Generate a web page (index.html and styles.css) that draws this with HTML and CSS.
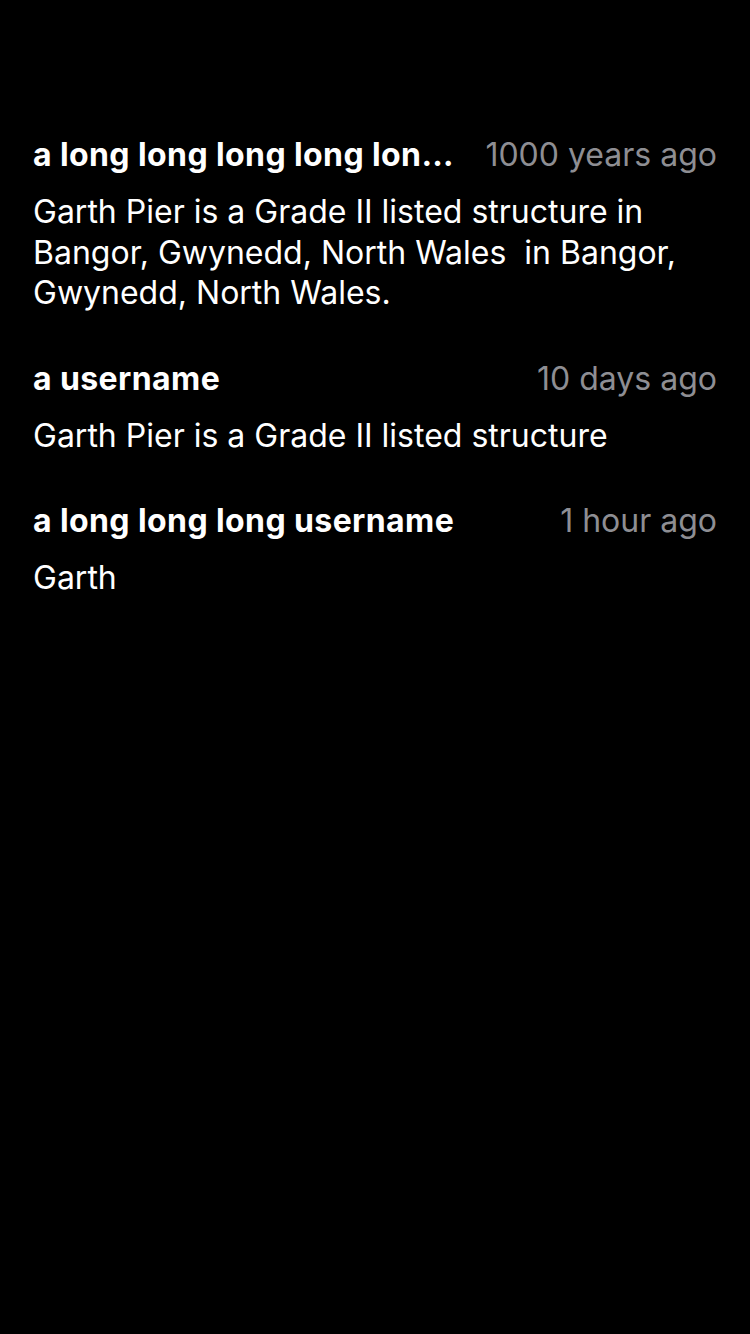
FILE: index.html
```html
<!DOCTYPE html>
<html>
<head>
<meta charset="utf-8">
<link rel="stylesheet" href="styles.css">
</head>
<body>
<main class="list">
  <article class="comment">
    <header class="comment-head">
      <span class="user">a long long long long long long username</span>
      <span class="time">1000 years ago</span>
    </header>
    <p class="body">Garth Pier is a Grade II listed structure in Bangor, Gwynedd, North Wales&nbsp; in Bangor, Gwynedd, North Wales.</p>
  </article>
  <article class="comment">
    <header class="comment-head">
      <span class="user">a username</span>
      <span class="time">10 days ago</span>
    </header>
    <p class="body">Garth Pier is a Grade II listed structure</p>
  </article>
  <article class="comment">
    <header class="comment-head">
      <span class="user">a long long long username</span>
      <span class="time">1 hour ago</span>
    </header>
    <p class="body">Garth</p>
  </article>
</main>
</body>
</html>
```
FILE: styles.css
```css
html, body {
  margin: 0;
  padding: 0;
  background: #000;
}
body {
  width: 750px;
  height: 1334px;
  font-family: Inter, "Noto Sans", sans-serif;
  color: #fff;
}
.list {
  display: flex;
  flex-direction: column;
  gap: 45px;
  padding: 135px 33px 0 33px;
}
.comment {
  display: flex;
  flex-direction: column;
  gap: 17px;
}
.comment-head {
  display: flex;
  align-items: center;
  justify-content: space-between;
  height: 40px;
}
.user {
  font-size: 32px;
  font-weight: 700;
  line-height: 40px;
  white-space: nowrap;
  overflow: hidden;
  text-overflow: ellipsis;
  min-width: 0;
  margin-right: 30px;
  letter-spacing: 0.4px;
}
.time {
  font-size: 32px;
  line-height: 40px;
  color: #8e8e93;
  white-space: nowrap;
  flex-shrink: 0;
}
.body {
  margin: 0;
  font-size: 32px;
  line-height: 40.5px;
}
```
